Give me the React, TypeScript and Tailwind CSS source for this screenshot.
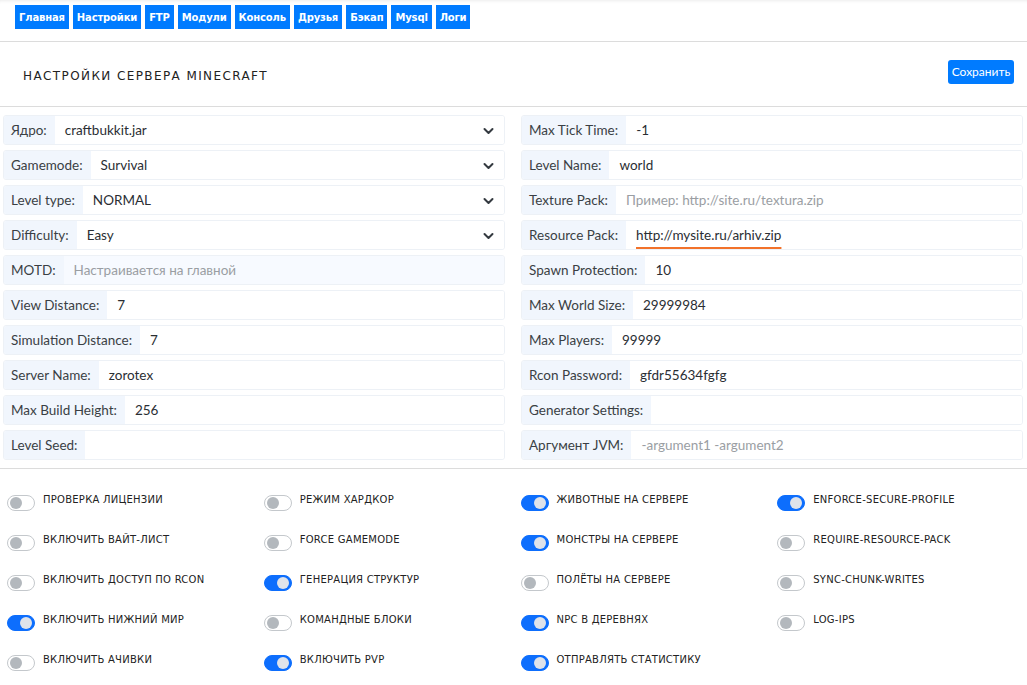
import { useState } from "react"

const navItems = ["Главная", "Настройки", "FTP", "Модули", "Консоль", "Друзья", "Бэкап", "Mysql", "Логи"]

interface Field {
    label: string
    value?: string
    placeholder?: string
    select?: boolean
    disabled?: boolean
    mark?: boolean
}

const leftFields: Field[] = [
    { label: "Ядро:", value: "craftbukkit.jar", select: true },
    { label: "Gamemode:", value: "Survival", select: true },
    { label: "Level type:", value: "NORMAL", select: true },
    { label: "Difficulty:", value: "Easy", select: true },
    { label: "MOTD:", placeholder: "Настраивается на главной", disabled: true },
    { label: "View Distance:", value: "7" },
    { label: "Simulation Distance:", value: "7" },
    { label: "Server Name:", value: "zorotex" },
    { label: "Max Build Height:", value: "256" },
    { label: "Level Seed:", value: "" },
]

const rightFields: Field[] = [
    { label: "Max Tick Time:", value: "-1" },
    { label: "Level Name:", value: "world" },
    { label: "Texture Pack:", placeholder: "Пример: http://site.ru/textura.zip" },
    { label: "Resource Pack:", value: "http://mysite.ru/arhiv.zip", mark: true },
    { label: "Spawn Protection:", value: "10" },
    { label: "Max World Size:", value: "29999984" },
    { label: "Max Players:", value: "99999" },
    { label: "Rcon Password:", value: "gfdr55634fgfg" },
    { label: "Generator Settings:", value: "" },
    { label: "Аргумент JVM:", placeholder: "-argument1 -argument2" },
]

const toggles: Array<[string, boolean] | null> = [
    ["Проверка лицензии", false], ["Режим хардкор", false], ["Животные на сервере", true], ["enforce-secure-profile", true],
    ["Включить вайт-лист", false], ["Force gamemode", false], ["Монстры на сервере", true], ["require-resource-pack", false],
    ["Включить доступ по RCON", false], ["Генерация структур", true], ["Полёты на сервере", false], ["sync-chunk-writes", false],
    ["Включить нижний мир", true], ["Командные блоки", false], ["NPC в деревнях", true], ["log-ips", false],
    ["Включить ачивки", false], ["Включить PVP", true], ["Отправлять статистику", true], null,
]

const FieldRow = ({ f }: { f: Field }) => (
    <div className="flex h-[30px] mb-[5px] rounded-[3px] border border-[#edf1f6] overflow-hidden text-[13.5px]">
        <div className="flex items-center pt-[1px] pl-[7px] pr-[8px] bg-[#f1f6fd] text-[#3a3f44] whitespace-nowrap">{f.label}</div>
        <div className={`flex-1 flex items-center pt-[1px] pl-[10px] pr-[10px] ${f.disabled ? "bg-[#f7faff]" : "bg-white"}`}>
            {f.value ? (
                <span className={`text-[#2a2e33] ${f.mark ? "underline decoration-[#f2722a] decoration-2 underline-offset-[7px]" : ""}`}>{f.value}</span>
            ) : (
                <span className="text-[#9a9ea3]">{f.placeholder ?? ""}</span>
            )}
            {f.select && (
                <svg className="ml-auto" width="11" height="8" viewBox="0 0 11 8">
                    <path d="M1.5 2 L5.5 6 L9.5 2" stroke="#343a40" strokeWidth="2" fill="none" strokeLinecap="round" strokeLinejoin="round" />
                </svg>
            )}
        </div>
    </div>
)

const Toggle = ({ label, init }: { label: string, init: boolean }) => {
    const [on, setOn] = useState(init)
    return (
        <div className="h-[40px] pl-[7px] flex items-start">
            <button
                onClick={() => setOn(!on)}
                className={`mt-[26px] w-[28px] h-[16px] rounded-full border flex items-center px-[2px] ${on ? "bg-[#0d6efd] border-[#0d6efd] justify-end" : "bg-white border-[#c4c8cc] justify-start"}`}
            >
                <span className={`w-[12px] h-[12px] rounded-full ${on ? "bg-[#dfe3ea]" : "bg-[#b3b8bd]"}`} />
            </button>
            <span className="ml-[8px] mt-[25px] text-[10px] leading-[12px] uppercase tracking-[0.25px] text-[#222]">{label}</span>
        </div>
    )
}

const App = () => {
    return (
        <div className="w-[1027px] min-h-[685px] bg-white font-['DejaVu_Sans',sans-serif]">
            <div className="flex gap-[4px] pl-[15px] pt-[5px] pb-[12px] border-b border-[#dcdcdc] shadow-[inset_0_4px_4px_-4px_rgba(0,0,0,0.12)]">
                {navItems.map((n) => (
                    <div key={n} className="h-[24px] px-[4px] flex items-center bg-[#007bff] text-white text-[10px] tracking-[-0.15px] font-bold">{n}</div>
                ))}
            </div>
            <div className="h-[65px] flex items-center justify-between pl-[23px] pr-[13px] border-b border-[#dcdcdc]">
                <div className="mt-[4px] text-[12px] tracking-[1.4px] text-[#222]">НАСТРОЙКИ СЕРВЕРА MINECRAFT</div>
                <button className="-mt-[4px] h-[24px] w-[66px] rounded-[3px] bg-[#007bff] text-white text-[12px] font-['Lato',sans-serif]">Сохранить</button>
            </div>
            <div className="grid grid-cols-2 gap-x-[16px] pl-[3px] pr-[4px] pt-[8px] pb-[3px] border-b border-[#dcdcdc] font-['Lato',sans-serif]">
                <div>
                    {leftFields.map((f) => <FieldRow key={f.label} f={f} />)}
                </div>
                <div>
                    {rightFields.map((f) => <FieldRow key={f.label} f={f} />)}
                </div>
            </div>
            <div className="grid grid-cols-4">
                {toggles.map((t, i) => t ? <Toggle key={i} label={t[0]} init={t[1]} /> : <div key={i} />)}
            </div>
        </div>
    )
}

export default App
